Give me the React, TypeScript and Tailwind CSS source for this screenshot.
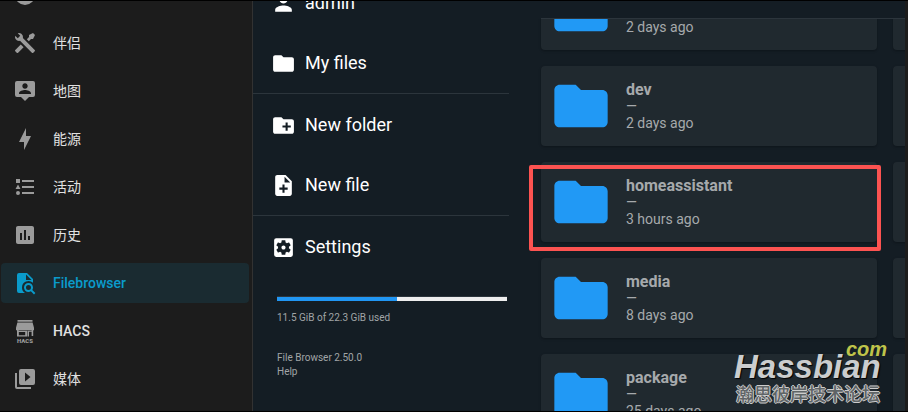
import type { ReactNode } from "react"
import { MdCreateNewFolder, MdFolder, MdNoteAdd, MdPerson, MdSettingsApplications } from "react-icons/md"

const panels = [
  {
    name: "伴侣",
    path: "M21.71 20.29L20.29 21.71A1 1 0 0 1 18.88 21.71L7 9.85A3.81 3.81 0 0 1 6 10A4 4 0 0 1 2.22 4.7L4.76 7.24L5.29 6.71L6.71 5.29L7.24 4.76L4.7 2.22A4 4 0 0 1 10 6A3.81 3.81 0 0 1 9.85 7L21.71 18.88A1 1 0 0 1 21.71 20.29M2.29 18.88A1 1 0 0 0 2.29 20.29L3.71 21.71A1 1 0 0 0 5.12 21.71L10.59 16.25L7.76 13.42M20 2L16 4V6L13.83 8.17L15.83 10.17L18 8H20L22 4Z",
  },
  {
    name: "地图",
    path: "M20,2H4A2,2 0 0,0 2,4V16A2,2 0 0,0 4,18H8L12,22L16,18H20A2,2 0 0,0 22,16V4A2,2 0 0,0 20,2M12,4.3C13.5,4.3 14.7,5.5 14.7,7C14.7,8.5 13.5,9.7 12,9.7C10.5,9.7 9.3,8.5 9.3,7C9.3,5.5 10.5,4.3 12,4.3M18,15H6V14.1C6,12.1 10,11 12,11C14,11 18,12.1 18,14.1V15Z",
  },
  { name: "能源", path: "M11 15H6L13 1V9H18L11 23V15Z" },
  {
    name: "活动",
    path: "M5,9.5L7.5,14H2.5L5,9.5M3,4H7V8H3V4M5,20A2,2 0 0,0 7,18A2,2 0 0,0 5,16A2,2 0 0,0 3,18A2,2 0 0,0 5,20M9,5V7H21V5H9M9,19H21V17H9V19M9,13H21V11H9V13Z",
  },
  {
    name: "历史",
    path: "M9 17H7V10H9V17M13 17H11V7H13V17M17 17H15V13H17V17M19 3H5C3.9 3 3 3.9 3 5V19C3 20.1 3.9 21 5 21H19C20.1 21 21 20.1 21 19V5C21 3.9 20.1 3 19 3Z",
  },
  {
    name: "Filebrowser",
    latin: true,
    active: true,
    path: "M14,2H6A2,2 0 0,0 4,4V20A2,2 0 0,0 6,22H12A6.5,6.5 0 0,1 9,16.5A6.5,6.5 0 0,1 20,11.8V8L14,2M13,9V3.5L18.5,9H13M15.5,12C18,12 20,14 20,16.5C20,17.38 19.75,18.21 19.31,18.9L22.39,22L21,23.39L17.88,20.32C17.19,20.75 16.37,21 15.5,21C13,21 11,19 11,16.5C11,14 13,12 15.5,12M15.5,14A2.5,2.5 0 0,0 13,16.5A2.5,2.5 0 0,0 15.5,19A2.5,2.5 0 0,0 18,16.5A2.5,2.5 0 0,0 15.5,14Z",
  },
  { name: "HACS", latin: true },
  {
    name: "媒体",
    path: "M4,6H2V20A2,2 0 0,0 4,22H18V20H4V6M20,2H8A2,2 0 0,0 6,4V16A2,2 0 0,0 8,18H20A2,2 0 0,0 22,16V4A2,2 0 0,0 20,2M12,14.5V5.5L17.5,10L12,14.5Z",
  },
]

const folders = [
  { name: "config", modified: "2 days ago" },
  { name: "dev", modified: "2 days ago" },
  { name: "homeassistant", modified: "3 hours ago", marked: true },
  { name: "media", modified: "8 days ago" },
  { name: "package", modified: "25 days ago" },
]

function HacsIcon() {
  return (
    <svg viewBox="0 0 24 24" className="size-6 shrink-0 overflow-visible" fill="currentColor" aria-hidden="true">
      <path d="M4.5 1h15v1.8h-15zM4.4 3.4h15.2l1.4 5.4v2.4H3V8.800z" />
      <path d="M4 11h1.600v6H4zM18.600 11h1.600v6h-1.600z" />
      <path fillRule="evenodd" d="M4 11.800h10.500V17.500H4zm1.600 1.200v3.200h6.600v-3.200zM14 11.800h5.500v1H16v4.700h-2z" />
      <text x="12" y="23.500" textAnchor="middle" className="font-[Roboto] text-[6px] font-black">
        HACS
      </text>
    </svg>
  )
}

function MenuItem({ icon, label }: { icon: ReactNode; label: string }) {
  return (
    <button className="flex h-15 w-full items-center gap-[9px] pl-[18px] text-left text-lg text-white">
      {icon}
      {label}
    </button>
  )
}

function FolderCard({ folder }: { folder: (typeof folders)[number] }) {
  return (
    <li className="relative">
      <button className="flex h-20 w-full items-center gap-[13px] rounded bg-[#20292f] pl-2 text-left text-sm leading-[17px] text-[#a6a9ac] shadow-sm shadow-black/20">
        <MdFolder className="size-16 shrink-0 text-[#2199f5]" />
        <span className="flex flex-col">
          <b className="text-base leading-[17px] font-bold">{folder.name}</b>
          <span>—</span>
          <span>{folder.modified}</span>
        </span>
      </button>
      {folder.marked && (
        <span className="pointer-events-none absolute top-[3px] -right-1 -left-3 h-[86px] rounded-xs border-4 border-[#fc5351]" />
      )}
    </li>
  )
}

export default function App() {
  return (
    <div className="relative flex h-screen overflow-hidden border-y border-black bg-[#1c1c1c] pr-[3px] font-[Roboto,'Noto_Sans_CJK_SC',sans-serif]">
      {/* Home Assistant sidebar */}
      <nav className="w-[253px] shrink-0 overflow-hidden border-r border-[#323232] pr-[3px] pl-px">
        <div className="-mt-[26px] flex flex-col gap-2">
          <a href="#overview" aria-label="概览" className="flex h-10 items-center px-3 text-[#9b9b9b]">
            <svg viewBox="0 0 24 24" className="size-6" fill="currentColor">
              <circle cx="12" cy="12" r="10" />
            </svg>
          </a>
          {panels.map((panel) => (
            <a
              key={panel.name}
              href={`#${panel.name}`}
              className={`flex h-10 items-center gap-4 rounded px-3 text-sm ${panel.latin ? "font-medium" : "font-normal"} ${
                panel.active ? "bg-[#1a2b31] text-[#0a9bcb]" : "text-[#e1e1e1]"
              }`}
            >
              <span className={panel.active ? "" : "text-[#9b9b9b]"}>
                {panel.path ? (
                  <svg viewBox="0 0 24 24" className="size-6" fill="currentColor" aria-hidden="true">
                    <path d={panel.path} />
                  </svg>
                ) : (
                  <HacsIcon />
                )}
              </span>
              {panel.name}
            </a>
          ))}
        </div>
      </nav>

      <div className="flex min-w-0 flex-1 overflow-hidden bg-[#141d24]">
        {/* File Browser menu */}
        <aside className="w-64 shrink-0">
          <div className="-mt-7 border-b border-[#2c353c]">
            <MenuItem icon={<MdPerson className="size-[25px]" />} label="admin" />
            <MenuItem icon={<MdFolder className="size-[25px]" />} label="My files" />
          </div>
          <div className="border-b border-[#2c353c] pt-px">
            <MenuItem icon={<MdCreateNewFolder className="size-[25px]" />} label="New folder" />
            <MenuItem icon={<MdNoteAdd className="size-[25px]" />} label="New file" />
          </div>
          <div className="pt-px">
            <MenuItem icon={<MdSettingsApplications className="size-[25px]" />} label="Settings" />
          </div>

          <div className="mt-[19px] mr-0.5 ml-6 text-[10px] leading-[14px] text-[#a1a5a7]">
            <div className="flex h-[5px] border-t border-[#2c353c] bg-[#eeeeee]" role="progressbar" aria-label="Disk usage" aria-valuenow={52}>
              <div className="bg-[#2196f3]" style={{ width: "52%" }} />
            </div>
            <p className="mt-2.5">11.5 GiB of 22.3 GiB used</p>
            <p className="mt-[26px]">File Browser 2.50.0</p>
            <a href="#help">Help</a>
          </div>
        </aside>

        {/* Listing */}
        <main className="flex min-w-0 flex-1 flex-col">
          <div className="ml-8 h-[18px] shrink-0 border-b border-[#2c353c]" />
          <div className="min-h-0 flex-1 overflow-hidden pl-8">
            <div className="-mt-[49px] grid grid-cols-[336px_336px] gap-4">
              <ul className="flex flex-col gap-4">
                {folders.map((folder) => (
                  <FolderCard key={folder.name} folder={folder} />
                ))}
              </ul>
              <div className="flex flex-col gap-4">
                {folders.map((folder) => (
                  <div key={folder.name} className="h-20 rounded bg-[#20292f] shadow-sm shadow-black/20" />
                ))}
              </div>
            </div>
          </div>
        </main>
      </div>

      {/* Watermark */}
      <div className="pointer-events-none absolute right-[21px] bottom-2 flex w-[153px] flex-col font-['Liberation_Sans',sans-serif] font-bold">
        <span className="self-end text-xl leading-5 text-[#bfc44a] italic">com</span>
        <span className="-mt-2 text-[33px] leading-8 text-[#cbcdce] italic text-shadow-[1px_1px_1px_#000]">Hassbian</span>
        <span className="ml-0.5 font-['Noto_Sans_CJK_SC',sans-serif] text-lg leading-5 font-medium text-[#5f6466] text-shadow-[1px_0_0_#ccc,-1px_0_0_#ccc,0_1px_0_#ccc,0_-1px_0_#ccc]">
          瀚思彼岸技术论坛
        </span>
      </div>
    </div>
  )
}
